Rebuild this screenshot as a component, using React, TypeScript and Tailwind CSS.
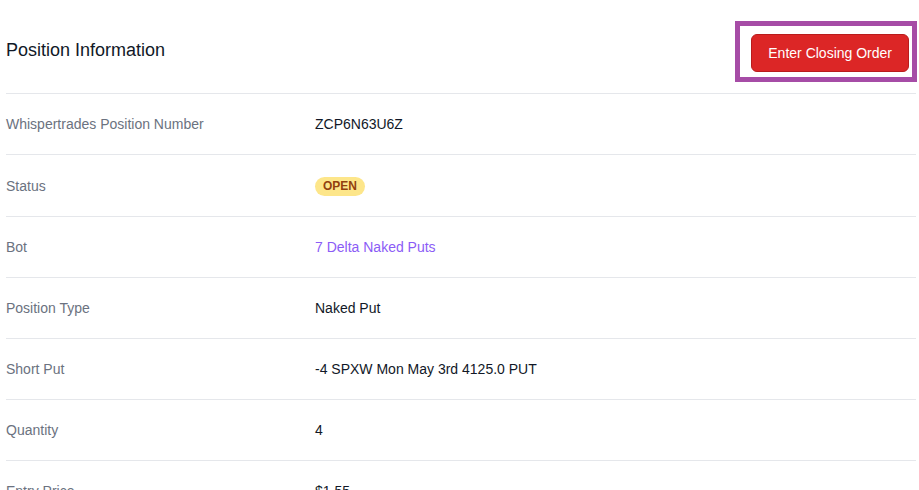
const rows: { label: string; value: React.ReactNode }[] = [
  { label: "Whispertrades Position Number", value: "ZCP6N63U6Z" },
  {
    label: "Status",
    value: (
      <span className="inline-flex items-center rounded-full bg-[#fde68a] px-[8px] text-[12px] font-bold leading-[19px] text-[#92400e]">
        OPEN
      </span>
    ),
  },
  {
    label: "Bot",
    value: <a className="text-[#8b5cf6]">7 Delta Naked Puts</a>,
  },
  { label: "Position Type", value: "Naked Put" },
  { label: "Short Put", value: "-4 SPXW Mon May 3rd 4125.0 PUT" },
  { label: "Quantity", value: "4" },
  { label: "Entry Price", value: "$1.55" },
];

export default function App() {
  return (
    <div className="h-[490px] w-[919px] overflow-hidden bg-white font-['Liberation_Sans',Arial,sans-serif]">
      <div className="pl-[6px] pr-[3px]">
        <div className="flex items-start justify-between border-b border-[#e5e7eb] pt-[21px] pb-[11px]">
          <h2 className="mt-[16px] text-[18px] leading-[26px] text-[#111827]">
            Position Information
          </h2>
          <div className="-mr-px border-[5px] border-[#a64ca6] pt-[8px] pr-[3px] pb-[5px] pl-[11px]">
            <button className="rounded-md border border-[#b91c1c] bg-[#dc2626] px-4 py-2 text-[14px] leading-[20px] text-white">
              Enter Closing Order
            </button>
          </div>
        </div>
        {rows.map((row) => (
          <div
            key={row.label}
            className="grid grid-cols-[309px_1fr] items-center border-b border-[#e5e7eb] py-5 text-[14px] leading-[20px]"
          >
            <div className="text-[#6b7280]">{row.label}</div>
            <div className="text-[#111827]">{row.value}</div>
          </div>
        ))}
      </div>
    </div>
  );
}
